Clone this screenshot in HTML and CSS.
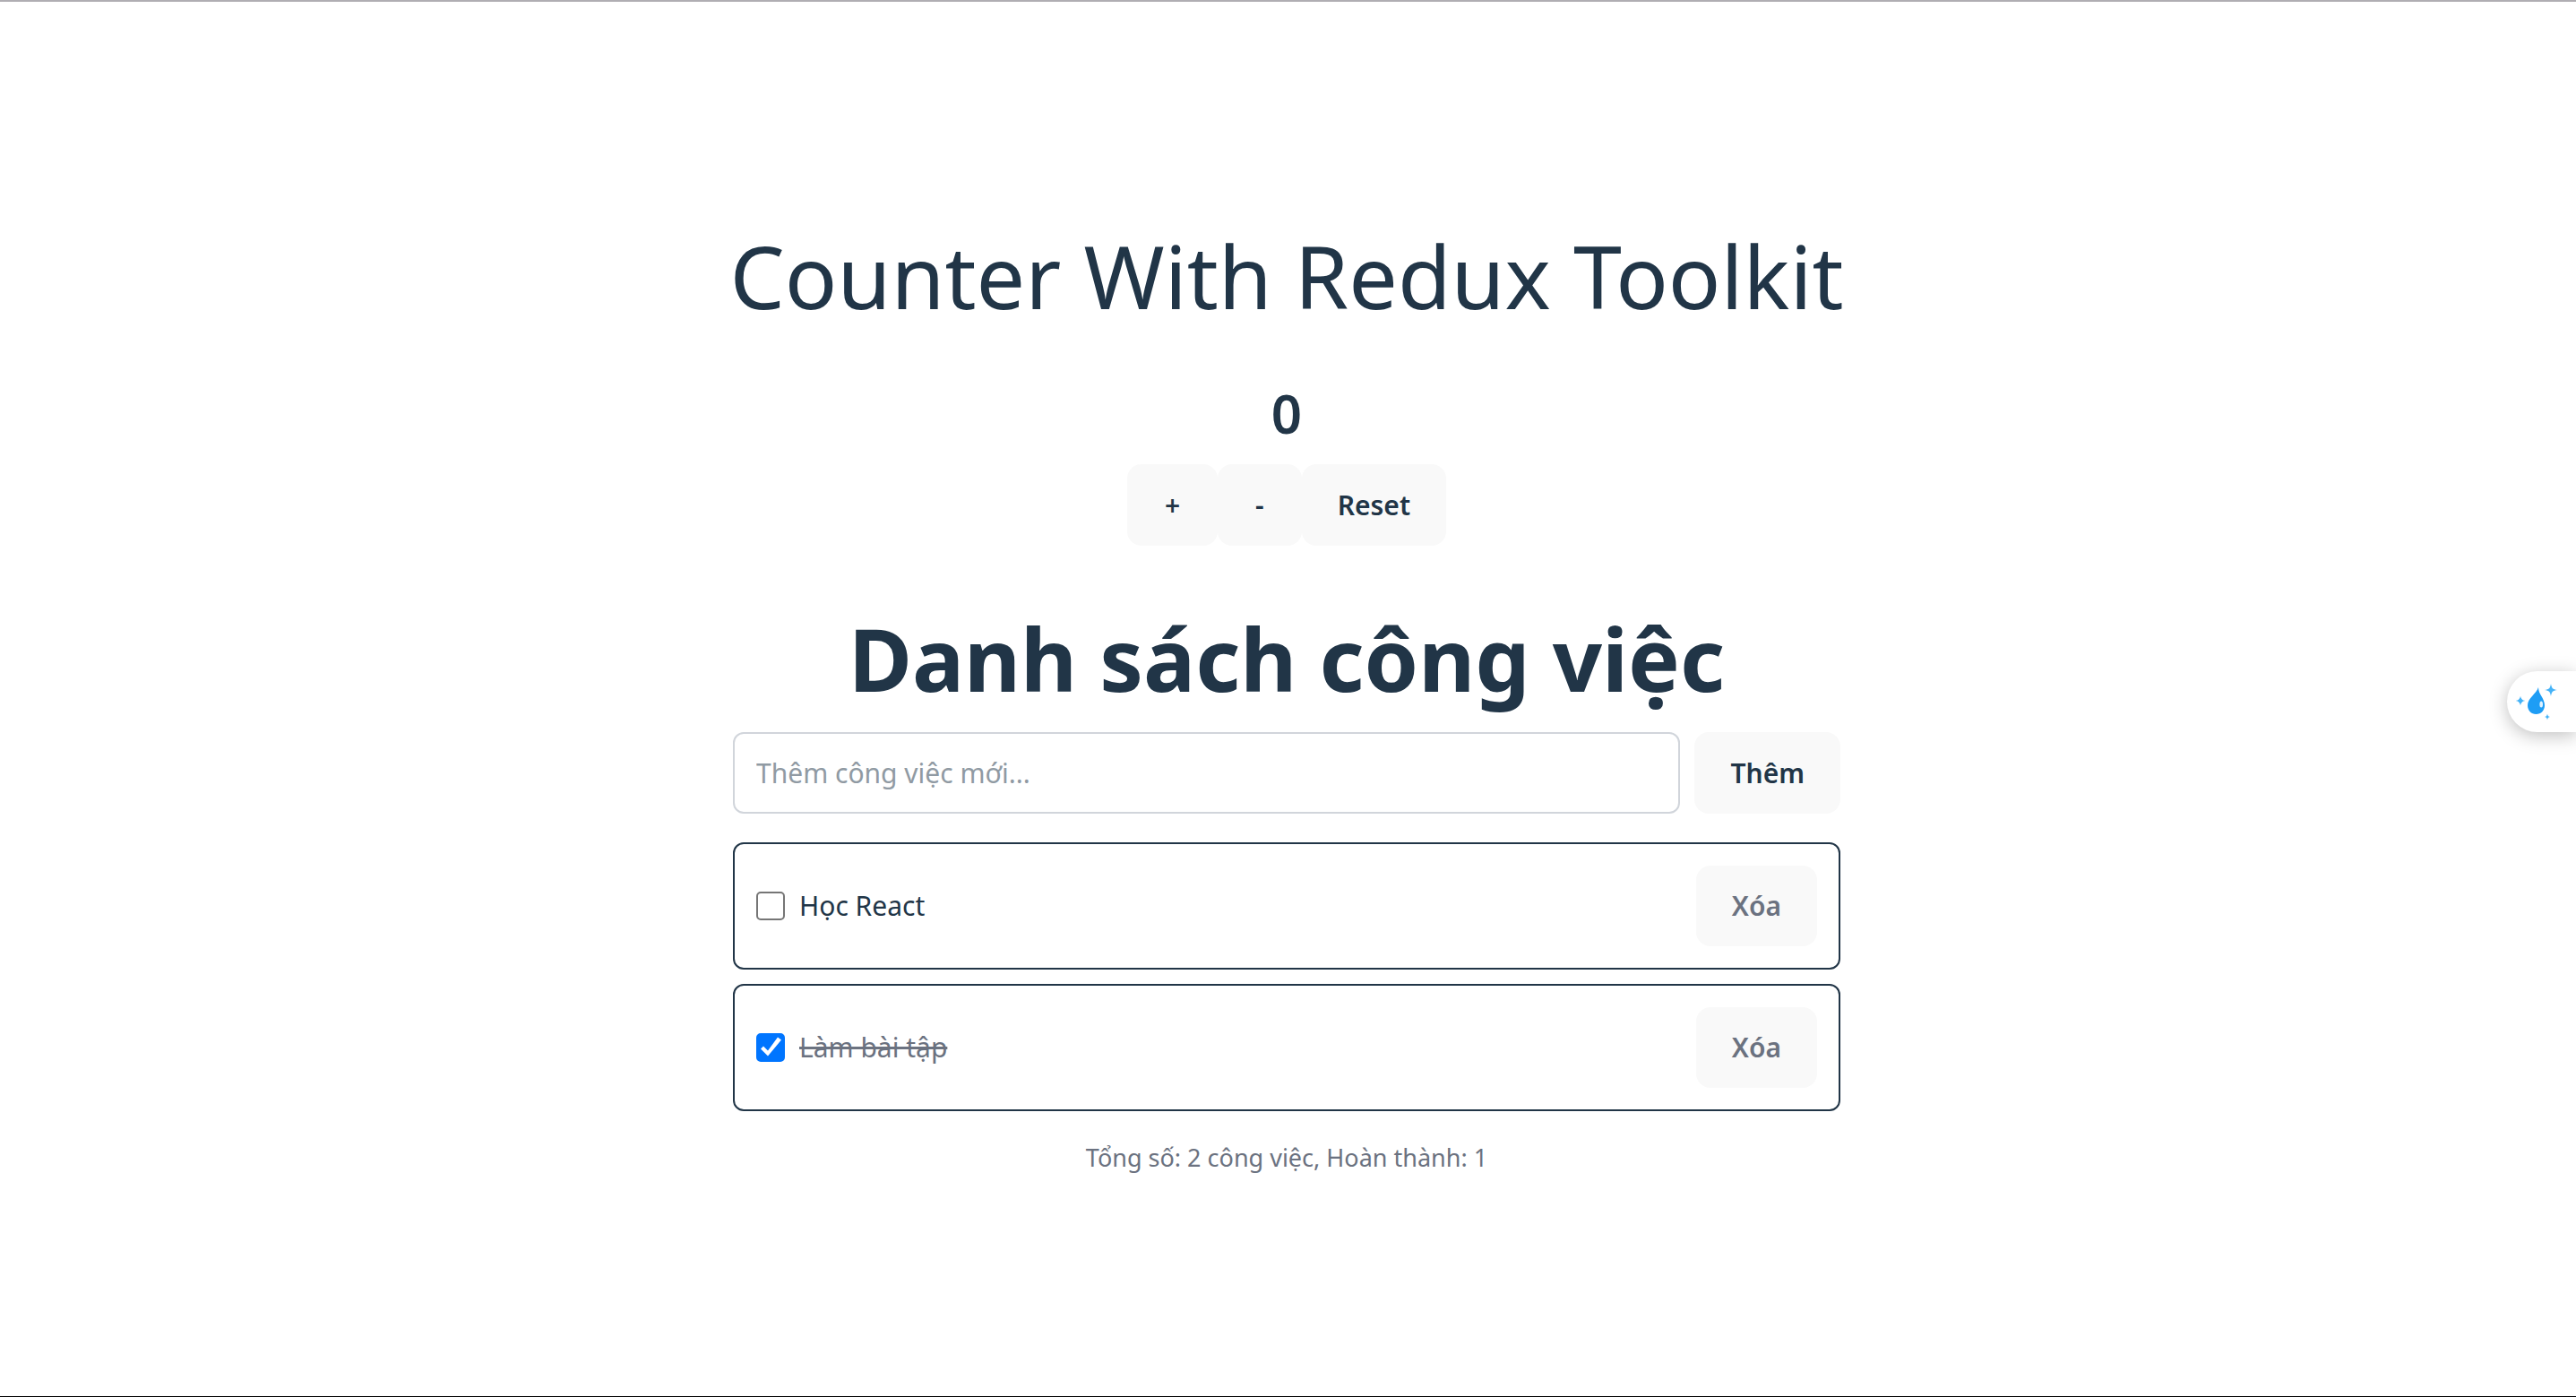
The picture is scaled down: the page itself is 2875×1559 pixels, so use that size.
FILE: index.html
```html
<!DOCTYPE html>
<html lang="vi">
<head>
<meta charset="utf-8">
<meta name="viewport" content="width=device-width, initial-scale=1">
<title>Counter With Redux Toolkit</title>
<link rel="stylesheet" href="styles.css">
</head>
<body>
<main class="app">
  <section class="counter">
    <h1 class="title">Counter With Redux Toolkit</h1>
    <p class="count">0</p>
    <div class="actions">
      <button class="btn btn-step" type="button">+</button>
      <button class="btn btn-step" type="button">-</button>
      <button class="btn" type="button">Reset</button>
    </div>
  </section>
  <section class="todo">
    <h1 class="title title-bold">Danh sách công việc</h1>
    <form class="add">
      <input class="add-input" type="text" aria-label="Thêm công việc mới" placeholder="Thêm công việc mới...">
      <button class="btn" type="button">Thêm</button>
    </form>
    <ul class="list">
      <li class="item">
        <label class="task"><input class="check" type="checkbox"><span>Học React</span></label>
        <button class="btn btn-muted" type="button">Xóa</button>
      </li>
      <li class="item">
        <label class="task"><input class="check" type="checkbox" checked><span class="done">Làm bài tập</span></label>
        <button class="btn btn-muted" type="button">Xóa</button>
      </li>
    </ul>
    <p class="summary">Tổng số: 2 công việc, Hoàn thành: 1</p>
  </section>
</main>
<button class="widget" type="button" aria-label="Theme">
  <svg class="widget-icon" viewBox="0 0 50 44" aria-hidden="true">
    <path fill="#1e9df5" d="M27 6C27 14 34 18 34 26C34 32 30 36 24.500 36S15 32 15 26C15 18 25 13 27 6Z"/>
    <ellipse cx="30.200" cy="25" rx="1.800" ry="3.500" fill="#dff2ff"/>
    <path fill="#45b3f8" d="M41 2C41.800 7 43 8.400 48 9C43 9.600 41.800 11 41 16C40.200 11 39 9.600 34 9C39 8.400 40.200 7 41 2ZM7 15.500C7.600 19 9 20.400 12.500 21C9 21.600 7.600 23 7 26.500C6.400 23 5 21.600 1.500 21C5 20.400 6.400 19 7 15.500ZM37 35.500C37.400 38 38 38.600 40.500 39C38 39.400 37.400 40 37 42.500C36.600 40 36 39.400 33.500 39C36 38.600 36.600 38 37 35.500Z"/>
  </svg>
</button>
</body>
</html>
```
FILE: styles.css
```css
* {
  box-sizing: border-box;
}

body {
  margin: 0;
  min-height: 100vh;
  display: flex;
  align-items: center;
  justify-content: center;
  padding-right: 3px;
  border-top: 2px solid #b0aeb3;
  border-bottom: 1px solid #000;
  background: #fff;
  color: #213547;
  font-family: "Segoe UI", "Noto Sans", sans-serif;
  font-size: 32px;
  line-height: 48px;
}

.app {
  width: 100%;
  max-width: 1364px;
  padding: 64px;
  display: flex;
  flex-direction: column;
  gap: 67px;
}

.counter {
  display: flex;
  flex-direction: column;
  align-items: center;
}

.title {
  margin: 0;
  font-size: 97px;
  line-height: 116px;
  font-weight: 400;
  text-align: center;
  white-space: nowrap;
}

.title-bold {
  font-weight: 700;
}

.count {
  margin: 60px 0 21px;
  font-size: 60px;
  line-height: 72px;
  font-weight: 600;
}

.actions {
  display: flex;
}

.btn {
  height: 91px;
  padding: 0 38px;
  border: 2px solid transparent;
  border-radius: 16px;
  background: #f9f9f9;
  color: inherit;
  font-family: inherit;
  font-size: 30px;
  font-weight: 600;
  cursor: pointer;
}

.btn-step {
  padding: 0 40px;
}

.btn-muted {
  height: 90px;
  color: #6b7280;
}

.add {
  display: flex;
  gap: 16px;
  margin: 25px 0 32px;
}

.add-input {
  flex: 1;
  min-width: 0;
  padding: 0 24px;
  border: 2px solid #d1d5db;
  border-radius: 12px;
  background: #fff;
  color: inherit;
  font-family: inherit;
  font-size: 30px;
}

.add-input::placeholder {
  color: #909aa3;
  opacity: 1;
}

.list {
  margin: 0;
  padding: 0;
  display: flex;
  flex-direction: column;
  gap: 16px;
  list-style: none;
}

.item {
  display: flex;
  align-items: center;
  justify-content: space-between;
  padding: 24px;
  border: 2px solid #213547;
  border-radius: 12px;
}

.task {
  display: flex;
  align-items: center;
  gap: 16px;
  font-size: 30px;
}

.check {
  appearance: none;
  width: 32px;
  height: 32px;
  margin: 0;
  border: 2px solid #767676;
  border-radius: 5px;
  background: #fff;
}

.check:checked {
  border-color: #0075ff;
  background: #0075ff;
}

.check:checked::after {
  content: "";
  display: block;
  height: 28px;
  background: #fff;
  clip-path: polygon(3px 16px, 6px 13px, 11px 18px, 22px 3px, 26px 6px, 11px 24px);
}

.done {
  color: #6b7280;
  text-decoration: line-through;
  text-decoration-thickness: 3px;
}

.summary {
  margin: 32px 0 0;
  color: #6b7280;
  font-size: 27px;
  line-height: 40px;
  text-align: center;
}

.widget {
  position: fixed;
  top: 749px;
  right: 0;
  width: 77px;
  height: 68px;
  padding: 0 0 0 8px;
  border: 0;
  border-radius: 34px 0 0 34px;
  background: #fff;
  box-shadow: 0 4px 20px rgba(0, 0, 0, 0.25);
}

.widget-icon {
  display: block;
  width: 50px;
  height: 44px;
}
```
